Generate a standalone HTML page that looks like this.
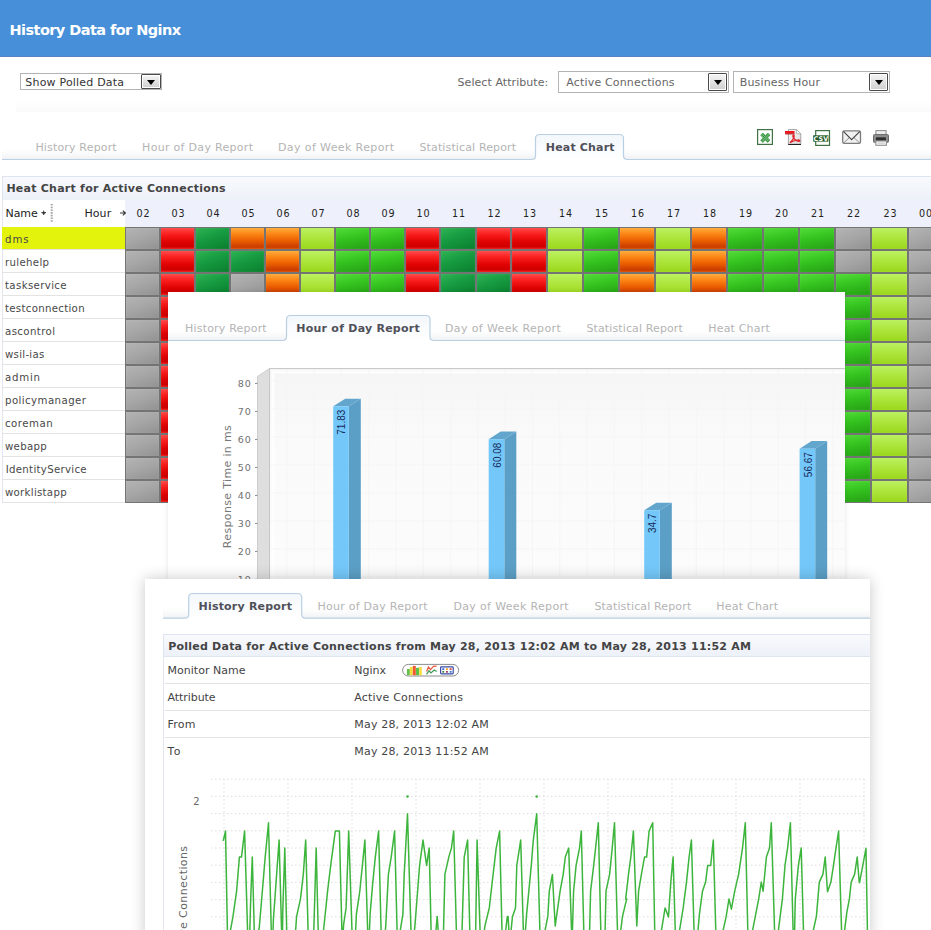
<!DOCTYPE html><html><head><meta charset="utf-8"><title>History Data for Nginx</title><style>

html,body{margin:0;padding:0;background:#fff;}
body{width:931px;height:930px;overflow:hidden;position:relative;font-family:'DejaVu Sans','Liberation Sans',sans-serif;font-size:11px;}
.t{position:absolute;white-space:pre;line-height:20px;height:20px;}
.abs{position:absolute;}
.c{position:absolute;height:21px;box-sizing:border-box;box-shadow:inset 0 0 1px rgba(255,255,255,0.35);}
.g{background:linear-gradient(160deg,#b4b4b4 0%,#a5a5a5 50%,#929292 100%);}
.r{background:linear-gradient(180deg,#ff4a4a 0%,#fa1e1e 30%,#df0303 65%,#cf0000 88%,#f41a1a 100%);}
.d{background:linear-gradient(160deg,#2fb354 0%,#169a40 45%,#0a7e2e 100%);}
.o{background:linear-gradient(180deg,#ffac3c 0%,#fb8414 30%,#ea5c00 62%,#c83c00 90%,#e05000 100%);}
.l{background:linear-gradient(180deg,#bbf160 0%,#aee63e 45%,#9bd71c 100%);}
.n{background:linear-gradient(170deg,#54dc3a 0%,#35c420 45%,#25a014 100%);}
.sel{position:absolute;box-sizing:border-box;border:1px solid #b4b4b4;background:#fff;}
.btn{position:absolute;box-sizing:border-box;border:1px solid #4a4a4a;border-radius:1px;background:linear-gradient(180deg,#f6f6f6 0%,#e2e2e2 50%,#cfcfcf 100%);box-shadow:inset 0 0 0 1px #fff;}
.btn:after{content:"";position:absolute;left:50%;top:50%;margin:-2px 0 0 -4px;border:4px solid transparent;border-top:5px solid #000;border-bottom:0;}
.pop{position:absolute;background:#fff;}
.rowline{position:absolute;height:1px;background:#e3e3e3;}

</style></head><body>
<div class="abs" style="left:0;top:0;width:931px;height:57px;background:#478fd8;border-bottom:1px solid #5b80bf;box-sizing:border-box"></div>
<div class="abs" style="left:16px;top:100px;width:915px;height:12px;background:linear-gradient(180deg,#fff,#fafafa)"></div>
<div class="sel" style="left:20px;top:73px;width:142px;height:17px"></div><div class="btn" style="left:141px;top:74px;width:20px;height:15px"></div>
<div class="sel" style="left:558px;top:71px;width:171px;height:22px"></div><div class="btn" style="left:708px;top:73px;width:19px;height:18px"></div>
<div class="sel" style="left:733px;top:71px;width:157px;height:22px"></div><div class="btn" style="left:869px;top:73px;width:19px;height:18px"></div>
<svg class="abs" style="left:0;top:0" width="931" height="170"><defs><linearGradient id="tg" x1="0" y1="0" x2="0" y2="1"><stop offset="0" stop-color="#f3f7fb"/><stop offset="1" stop-color="#fff"/></linearGradient><linearGradient id="sh" x1="0" y1="0" x2="0" y2="1"><stop offset="0" stop-color="#fff" stop-opacity="0"/><stop offset="1" stop-color="#f0f1f4"/></linearGradient></defs><rect x="2" y="146" width="929" height="13" fill="url(#sh)"/><path d="M531.5,159.5 Q535.5,159.5 535.5,155.5 V138.5 Q535.5,134.5 539.5,134.5 H619.5 Q623.5,134.5 623.5,138.5 V155.5 Q623.5,159.5 627.5,159.5 Z" fill="#fff"/><path d="M531.5,159.5 Q535.5,159.5 535.5,155.5 V138.5 Q535.5,134.5 539.5,134.5 H619.5 Q623.5,134.5 623.5,138.5 V155.5 Q623.5,159.5 627.5,159.5 Z" fill="url(#tg)"/><path d="M2,159.5 H531.5 Q535.5,159.5 535.5,155.5 V138.5 Q535.5,134.5 539.5,134.5 H619.5 Q623.5,134.5 623.5,138.5 V155.5 Q623.5,159.5 627.5,159.5 H931" fill="none" stroke="#b9d0e4" stroke-width="1.2"/></svg>
<svg class="abs" style="left:755px;top:127px" width="140" height="22" viewBox="755 127 140 22">
<defs><pattern id="hx" width="1.6" height="1.6" patternUnits="userSpaceOnUse" patternTransform="rotate(45)"><rect width="1.6" height="1.6" fill="#2f8f3a"/><rect width="0.55" height="1.6" fill="#a9dcae"/></pattern>
<linearGradient id="pg" x1="0" y1="0" x2="1" y2="1"><stop offset="0" stop-color="#fbfbfb"/><stop offset="1" stop-color="#d9d9d9"/></linearGradient></defs>
<rect x="757.6" y="129.6" width="14.8" height="14.8" fill="#fff" stroke="#3f7143" stroke-width="1.2"/>
<path d="M761.6 134 L769 141.4 M769 134 L761.6 141.4" stroke="#2f8f3a" stroke-width="3.6" fill="none"/><path d="M761.6 134 L769 141.4 M769 134 L761.6 141.4" stroke="url(#hx)" stroke-width="3" fill="none"/>
<path d="M788.4 129.6 H796.6 L800.8 133.8 V144.2 H788.4 Z" fill="url(#pg)" stroke="#9c9c9c" stroke-width="0.9"/>
<path d="M788.2 144.5 H801" stroke="#222" stroke-width="1"/>
<path d="M796.6 129.6 V133.8 H800.8 Z" fill="#fff" stroke="#9c9c9c" stroke-width="0.7"/>
<rect x="785" y="131" width="9.5" height="2.7" fill="#f0151c"/><rect x="785" y="133.5" width="9.5" height="0.9" fill="#a80c10"/>
<path d="M790 142.8 C792.6 140 794.6 137.2 794.2 135.6 C793.8 134.4 792.6 135 792.9 136.5 C793.5 139 796.6 141.2 799 141.3 C800.4 141.2 799.8 139.8 798 140 C795.4 140.3 792 141.4 790 142.8 Z" fill="none" stroke="#e0242b" stroke-width="1.25"/>
<rect x="815.7" y="130.6" width="13.8" height="14.8" fill="#fff" stroke="#3f7143" stroke-width="1.2"/>
<rect x="813.2" y="135.3" width="15.2" height="6.3" fill="#235a24"/>
<text x="820.9" y="140.8" font-family="DejaVu Sans,Liberation Sans,sans-serif" font-size="6.4" font-weight="bold" fill="#fff" text-anchor="middle" letter-spacing="0.2" opacity="0.99">CSV</text>
<rect x="842.7" y="130.8" width="17.8" height="12.6" rx="1.6" fill="#f1f1f1" stroke="#7c7c7c" stroke-width="1.3"/>
<path d="M843.6 143 L849.6 137.4 M859.8 143 L853.6 137.4" fill="none" stroke="#777" stroke-width="0.8"/>
<path d="M843.4 131.4 L851.6 139.6 L859.9 131.4" fill="none" stroke="#454545" stroke-width="1.1"/>
<rect x="875.9" y="130.6" width="10.2" height="4.4" fill="#ececec" stroke="#8a8a8a" stroke-width="1"/>
<rect x="873.5" y="134.6" width="15" height="7.8" rx="1" fill="#8e8e8e" stroke="#686868" stroke-width="1"/>
<rect x="875.9" y="137.3" width="10" height="3.2" fill="#2e2e2e"/>
<rect x="875.8" y="141" width="10.6" height="4.3" fill="#f3f3f3" stroke="#8a8a8a" stroke-width="1"/>
<path d="M877.5 143.2 H884.8" stroke="#bdbdbd" stroke-width="0.8"/>
</svg>
<div class="abs" style="left:2px;top:176px;width:929px;height:24px;box-sizing:border-box;border-top:1px solid #dfe5f0;border-left:1px solid #dfe5f0;background:linear-gradient(180deg,#f8fafd 0%,#edf1f8 100%)"></div>
<div class="abs" style="left:125px;top:200px;width:806px;height:27px;background:#eef1fb"></div>
<div class="abs" style="left:2px;top:200px;width:123px;height:27px;background:#fff;border-left:1px solid #e3e6ee;box-sizing:border-box"></div>
<svg class="abs" style="left:38px;top:200px" width="92" height="26" viewBox="38 200 92 26">
<path d="M43.7 210.6 V214.6 M41.4 212.6 H46" stroke="#333" stroke-width="1"/><path d="M42.2 213 L43.7 215 L45.2 213 Z" fill="#333"/>
<path d="M51.7 204 V222.5" stroke="#a4a4a4" stroke-width="2" stroke-dasharray="1.6 1.1"/>
<path d="M120 213 H125 M122.8 210.6 L125.4 213 L122.8 215.4" fill="none" stroke="#333" stroke-width="1.1"/>
</svg>
<div class="t" style="left:93.4px;width:100px;text-align:center;top:203.9px;font-size:9.6px;font-weight:normal;color:#222;letter-spacing:0.9px;">02</div>
<div class="t" style="left:128.4px;width:100px;text-align:center;top:203.9px;font-size:9.6px;font-weight:normal;color:#222;letter-spacing:0.9px;">03</div>
<div class="t" style="left:163.4px;width:100px;text-align:center;top:203.9px;font-size:9.6px;font-weight:normal;color:#222;letter-spacing:0.9px;">04</div>
<div class="t" style="left:198.4px;width:100px;text-align:center;top:203.9px;font-size:9.6px;font-weight:normal;color:#222;letter-spacing:0.9px;">05</div>
<div class="t" style="left:233.4px;width:100px;text-align:center;top:203.9px;font-size:9.6px;font-weight:normal;color:#222;letter-spacing:0.9px;">06</div>
<div class="t" style="left:268.4px;width:100px;text-align:center;top:203.9px;font-size:9.6px;font-weight:normal;color:#222;letter-spacing:0.9px;">07</div>
<div class="t" style="left:303.4px;width:100px;text-align:center;top:203.9px;font-size:9.6px;font-weight:normal;color:#222;letter-spacing:0.9px;">08</div>
<div class="t" style="left:338.4px;width:100px;text-align:center;top:203.9px;font-size:9.6px;font-weight:normal;color:#222;letter-spacing:0.9px;">09</div>
<div class="t" style="left:373.4px;width:100px;text-align:center;top:203.9px;font-size:9.6px;font-weight:normal;color:#222;letter-spacing:0.9px;">10</div>
<div class="t" style="left:408.9px;width:100px;text-align:center;top:203.9px;font-size:9.6px;font-weight:normal;color:#222;letter-spacing:0.9px;">11</div>
<div class="t" style="left:444.4px;width:100px;text-align:center;top:203.9px;font-size:9.6px;font-weight:normal;color:#222;letter-spacing:0.9px;">12</div>
<div class="t" style="left:479.9px;width:100px;text-align:center;top:203.9px;font-size:9.6px;font-weight:normal;color:#222;letter-spacing:0.9px;">13</div>
<div class="t" style="left:515.9px;width:100px;text-align:center;top:203.9px;font-size:9.6px;font-weight:normal;color:#222;letter-spacing:0.9px;">14</div>
<div class="t" style="left:551.9px;width:100px;text-align:center;top:203.9px;font-size:9.6px;font-weight:normal;color:#222;letter-spacing:0.9px;">15</div>
<div class="t" style="left:587.9px;width:100px;text-align:center;top:203.9px;font-size:9.6px;font-weight:normal;color:#222;letter-spacing:0.9px;">16</div>
<div class="t" style="left:623.9px;width:100px;text-align:center;top:203.9px;font-size:9.6px;font-weight:normal;color:#222;letter-spacing:0.9px;">17</div>
<div class="t" style="left:659.9px;width:100px;text-align:center;top:203.9px;font-size:9.6px;font-weight:normal;color:#222;letter-spacing:0.9px;">18</div>
<div class="t" style="left:695.9px;width:100px;text-align:center;top:203.9px;font-size:9.6px;font-weight:normal;color:#222;letter-spacing:0.9px;">19</div>
<div class="t" style="left:731.9px;width:100px;text-align:center;top:203.9px;font-size:9.6px;font-weight:normal;color:#222;letter-spacing:0.9px;">20</div>
<div class="t" style="left:767.9px;width:100px;text-align:center;top:203.9px;font-size:9.6px;font-weight:normal;color:#222;letter-spacing:0.9px;">21</div>
<div class="t" style="left:803.9px;width:100px;text-align:center;top:203.9px;font-size:9.6px;font-weight:normal;color:#222;letter-spacing:0.9px;">22</div>
<div class="t" style="left:840.4px;width:100px;text-align:center;top:203.9px;font-size:9.6px;font-weight:normal;color:#222;letter-spacing:0.9px;">23</div>
<div class="t" style="left:875.9px;width:100px;text-align:center;top:203.9px;font-size:9.6px;font-weight:normal;color:#222;letter-spacing:0.9px;">00</div>
<div class="abs" style="left:2px;top:227px;width:123px;height:276px;background:#fff;border-left:1px solid #e3e6ee;box-sizing:border-box"></div>
<div class="abs" style="left:2px;top:227px;width:123px;height:23px;background:#e4f30c"></div>
<div class="rowline" style="left:2px;top:249px;width:123px"></div>
<div class="rowline" style="left:2px;top:272px;width:123px"></div>
<div class="rowline" style="left:2px;top:295px;width:123px"></div>
<div class="rowline" style="left:2px;top:318px;width:123px"></div>
<div class="rowline" style="left:2px;top:341px;width:123px"></div>
<div class="rowline" style="left:2px;top:364px;width:123px"></div>
<div class="rowline" style="left:2px;top:387px;width:123px"></div>
<div class="rowline" style="left:2px;top:410px;width:123px"></div>
<div class="rowline" style="left:2px;top:433px;width:123px"></div>
<div class="rowline" style="left:2px;top:456px;width:123px"></div>
<div class="rowline" style="left:2px;top:479px;width:123px"></div>
<div class="rowline" style="left:2px;top:502px;width:123px"></div>
<div class="abs" style="left:125px;top:227px;width:806px;height:276px;background:#747474"></div>
<div class="c g" style="left:126px;top:228px;width:33px"></div>
<div class="c r" style="left:161px;top:228px;width:33px"></div>
<div class="c d" style="left:196px;top:228px;width:33px"></div>
<div class="c o" style="left:231px;top:228px;width:33px"></div>
<div class="c o" style="left:266px;top:228px;width:33px"></div>
<div class="c l" style="left:301px;top:228px;width:33px"></div>
<div class="c n" style="left:336px;top:228px;width:33px"></div>
<div class="c n" style="left:371px;top:228px;width:33px"></div>
<div class="c r" style="left:406px;top:228px;width:33px"></div>
<div class="c d" style="left:441px;top:228px;width:34px"></div>
<div class="c r" style="left:477px;top:228px;width:33px"></div>
<div class="c r" style="left:512px;top:228px;width:34px"></div>
<div class="c l" style="left:548px;top:228px;width:34px"></div>
<div class="c n" style="left:584px;top:228px;width:34px"></div>
<div class="c o" style="left:620px;top:228px;width:34px"></div>
<div class="c l" style="left:656px;top:228px;width:34px"></div>
<div class="c o" style="left:692px;top:228px;width:34px"></div>
<div class="c n" style="left:728px;top:228px;width:34px"></div>
<div class="c n" style="left:764px;top:228px;width:34px"></div>
<div class="c n" style="left:800px;top:228px;width:34px"></div>
<div class="c g" style="left:836px;top:228px;width:34px"></div>
<div class="c l" style="left:872px;top:228px;width:35px"></div>
<div class="c g" style="left:909px;top:228px;width:35px"></div>
<div class="c g" style="left:126px;top:251px;width:33px"></div>
<div class="c r" style="left:161px;top:251px;width:33px"></div>
<div class="c d" style="left:196px;top:251px;width:33px"></div>
<div class="c d" style="left:231px;top:251px;width:33px"></div>
<div class="c o" style="left:266px;top:251px;width:33px"></div>
<div class="c l" style="left:301px;top:251px;width:33px"></div>
<div class="c n" style="left:336px;top:251px;width:33px"></div>
<div class="c n" style="left:371px;top:251px;width:33px"></div>
<div class="c r" style="left:406px;top:251px;width:33px"></div>
<div class="c d" style="left:441px;top:251px;width:34px"></div>
<div class="c r" style="left:477px;top:251px;width:33px"></div>
<div class="c r" style="left:512px;top:251px;width:34px"></div>
<div class="c l" style="left:548px;top:251px;width:34px"></div>
<div class="c n" style="left:584px;top:251px;width:34px"></div>
<div class="c o" style="left:620px;top:251px;width:34px"></div>
<div class="c l" style="left:656px;top:251px;width:34px"></div>
<div class="c o" style="left:692px;top:251px;width:34px"></div>
<div class="c n" style="left:728px;top:251px;width:34px"></div>
<div class="c n" style="left:764px;top:251px;width:34px"></div>
<div class="c n" style="left:800px;top:251px;width:34px"></div>
<div class="c g" style="left:836px;top:251px;width:34px"></div>
<div class="c l" style="left:872px;top:251px;width:35px"></div>
<div class="c g" style="left:909px;top:251px;width:35px"></div>
<div class="c g" style="left:126px;top:274px;width:33px"></div>
<div class="c r" style="left:161px;top:274px;width:33px"></div>
<div class="c d" style="left:196px;top:274px;width:33px"></div>
<div class="c g" style="left:231px;top:274px;width:33px"></div>
<div class="c o" style="left:266px;top:274px;width:33px"></div>
<div class="c l" style="left:301px;top:274px;width:33px"></div>
<div class="c n" style="left:336px;top:274px;width:33px"></div>
<div class="c n" style="left:371px;top:274px;width:33px"></div>
<div class="c r" style="left:406px;top:274px;width:33px"></div>
<div class="c d" style="left:441px;top:274px;width:34px"></div>
<div class="c d" style="left:477px;top:274px;width:33px"></div>
<div class="c r" style="left:512px;top:274px;width:34px"></div>
<div class="c l" style="left:548px;top:274px;width:34px"></div>
<div class="c n" style="left:584px;top:274px;width:34px"></div>
<div class="c o" style="left:620px;top:274px;width:34px"></div>
<div class="c l" style="left:656px;top:274px;width:34px"></div>
<div class="c o" style="left:692px;top:274px;width:34px"></div>
<div class="c n" style="left:728px;top:274px;width:34px"></div>
<div class="c n" style="left:764px;top:274px;width:34px"></div>
<div class="c n" style="left:800px;top:274px;width:34px"></div>
<div class="c n" style="left:836px;top:274px;width:34px"></div>
<div class="c l" style="left:872px;top:274px;width:35px"></div>
<div class="c g" style="left:909px;top:274px;width:35px"></div>
<div class="c g" style="left:126px;top:297px;width:33px"></div>
<div class="c r" style="left:161px;top:297px;width:33px"></div>
<div class="c n" style="left:836px;top:297px;width:34px"></div>
<div class="c l" style="left:872px;top:297px;width:35px"></div>
<div class="c g" style="left:909px;top:297px;width:35px"></div>
<div class="c g" style="left:126px;top:320px;width:33px"></div>
<div class="c r" style="left:161px;top:320px;width:33px"></div>
<div class="c n" style="left:836px;top:320px;width:34px"></div>
<div class="c l" style="left:872px;top:320px;width:35px"></div>
<div class="c g" style="left:909px;top:320px;width:35px"></div>
<div class="c g" style="left:126px;top:343px;width:33px"></div>
<div class="c r" style="left:161px;top:343px;width:33px"></div>
<div class="c n" style="left:836px;top:343px;width:34px"></div>
<div class="c l" style="left:872px;top:343px;width:35px"></div>
<div class="c g" style="left:909px;top:343px;width:35px"></div>
<div class="c g" style="left:126px;top:366px;width:33px"></div>
<div class="c r" style="left:161px;top:366px;width:33px"></div>
<div class="c n" style="left:836px;top:366px;width:34px"></div>
<div class="c l" style="left:872px;top:366px;width:35px"></div>
<div class="c g" style="left:909px;top:366px;width:35px"></div>
<div class="c g" style="left:126px;top:389px;width:33px"></div>
<div class="c r" style="left:161px;top:389px;width:33px"></div>
<div class="c n" style="left:836px;top:389px;width:34px"></div>
<div class="c l" style="left:872px;top:389px;width:35px"></div>
<div class="c g" style="left:909px;top:389px;width:35px"></div>
<div class="c g" style="left:126px;top:412px;width:33px"></div>
<div class="c r" style="left:161px;top:412px;width:33px"></div>
<div class="c n" style="left:836px;top:412px;width:34px"></div>
<div class="c l" style="left:872px;top:412px;width:35px"></div>
<div class="c g" style="left:909px;top:412px;width:35px"></div>
<div class="c g" style="left:126px;top:435px;width:33px"></div>
<div class="c r" style="left:161px;top:435px;width:33px"></div>
<div class="c n" style="left:836px;top:435px;width:34px"></div>
<div class="c l" style="left:872px;top:435px;width:35px"></div>
<div class="c g" style="left:909px;top:435px;width:35px"></div>
<div class="c g" style="left:126px;top:458px;width:33px"></div>
<div class="c r" style="left:161px;top:458px;width:33px"></div>
<div class="c n" style="left:836px;top:458px;width:34px"></div>
<div class="c l" style="left:872px;top:458px;width:35px"></div>
<div class="c g" style="left:909px;top:458px;width:35px"></div>
<div class="c g" style="left:126px;top:481px;width:33px"></div>
<div class="c r" style="left:161px;top:481px;width:33px"></div>
<div class="c n" style="left:836px;top:481px;width:34px"></div>
<div class="c l" style="left:872px;top:481px;width:35px"></div>
<div class="c g" style="left:909px;top:481px;width:35px"></div>
<div class="t" style="left:9.5px;top:20.2px;font-size:14.5px;font-weight:bold;color:#fff;letter-spacing:-0.571px;">History Data for Nginx</div>
<div class="t" style="left:25.3px;top:73.4px;font-size:11px;font-weight:normal;color:#333;letter-spacing:0.195px;">Show Polled Data</div>
<div class="t" style="left:457.5px;top:73.4px;font-size:11px;font-weight:normal;color:#666;letter-spacing:0.068px;">Select Attribute:</div>
<div class="t" style="left:566.3px;top:73.4px;font-size:11px;font-weight:normal;color:#666;letter-spacing:0.165px;">Active Connections</div>
<div class="t" style="left:739.8px;top:73.4px;font-size:11px;font-weight:normal;color:#666;letter-spacing:0.142px;">Business Hour</div>
<div class="t" style="left:35.4px;top:138.4px;font-size:11px;font-weight:normal;color:#b4b4b4;letter-spacing:0.169px;">History Report</div>
<div class="t" style="left:142.1px;top:138.4px;font-size:11px;font-weight:normal;color:#b4b4b4;letter-spacing:0.301px;">Hour of Day Report</div>
<div class="t" style="left:278.0px;top:138.4px;font-size:11px;font-weight:normal;color:#b4b4b4;letter-spacing:0.387px;">Day of Week Report</div>
<div class="t" style="left:419.5px;top:138.4px;font-size:11px;font-weight:normal;color:#b4b4b4;letter-spacing:0.129px;">Statistical Report</div>
<div class="t" style="left:545.8px;top:138.4px;font-size:11px;font-weight:bold;color:#50505a;letter-spacing:0.168px;">Heat Chart</div>
<div class="t" style="left:6.4px;top:179.4px;font-size:11px;font-weight:bold;color:#444;letter-spacing:0.245px;">Heat Chart for Active Connections</div>
<div class="t" style="left:5.5px;top:204.4px;font-size:11px;font-weight:normal;color:#222;letter-spacing:-0.084px;">Name</div>
<div class="t" style="left:84.4px;top:204.4px;font-size:11px;font-weight:normal;color:#222;letter-spacing:0.100px;">Hour</div>
<div class="t" style="left:5.0px;top:229.7px;font-size:10.2px;font-weight:normal;color:#484848;letter-spacing:0.948px;">dms</div>
<div class="t" style="left:5.0px;top:252.7px;font-size:10.2px;font-weight:normal;color:#484848;letter-spacing:0.319px;">rulehelp</div>
<div class="t" style="left:5.0px;top:275.7px;font-size:10.2px;font-weight:normal;color:#484848;letter-spacing:0.366px;">taskservice</div>
<div class="t" style="left:5.0px;top:298.7px;font-size:10.2px;font-weight:normal;color:#484848;letter-spacing:0.300px;">testconnection</div>
<div class="t" style="left:5.0px;top:321.7px;font-size:10.2px;font-weight:normal;color:#484848;letter-spacing:0.391px;">ascontrol</div>
<div class="t" style="left:5.0px;top:344.7px;font-size:10.2px;font-weight:normal;color:#484848;letter-spacing:0.277px;">wsil-ias</div>
<div class="t" style="left:5.0px;top:367.7px;font-size:10.2px;font-weight:normal;color:#484848;letter-spacing:0.770px;">admin</div>
<div class="t" style="left:5.0px;top:390.7px;font-size:10.2px;font-weight:normal;color:#484848;letter-spacing:0.427px;">policymanager</div>
<div class="t" style="left:5.0px;top:413.7px;font-size:10.2px;font-weight:normal;color:#484848;letter-spacing:0.483px;">coreman</div>
<div class="t" style="left:5.0px;top:436.7px;font-size:10.2px;font-weight:normal;color:#484848;letter-spacing:0.270px;">webapp</div>
<div class="t" style="left:5.7px;top:459.7px;font-size:10.2px;font-weight:normal;color:#484848;letter-spacing:0.300px;">IdentityService</div>
<div class="t" style="left:5.0px;top:482.7px;font-size:10.2px;font-weight:normal;color:#484848;letter-spacing:0.280px;">worklistapp</div>
<div class="pop" style="left:168px;top:292px;width:677px;height:300px;box-shadow:0 0 5px rgba(0,0,0,0.10)">
</div>
<svg class="abs" style="left:0;top:0" width="931" height="600"><rect x="168" y="327" width="677" height="13" fill="url(#sh)"/><path d="M282.5,340.5 Q286.5,340.5 286.5,336.5 V319.5 Q286.5,315.5 290.5,315.5 H426 Q430,315.5 430,319.5 V336.5 Q430,340.5 434,340.5 Z" fill="#fff"/><path d="M282.5,340.5 Q286.5,340.5 286.5,336.5 V319.5 Q286.5,315.5 290.5,315.5 H426 Q430,315.5 430,319.5 V336.5 Q430,340.5 434,340.5 Z" fill="url(#tg)"/><path d="M168,340.5 H282.5 Q286.5,340.5 286.5,336.5 V319.5 Q286.5,315.5 290.5,315.5 H426 Q430,315.5 430,319.5 V336.5 Q430,340.5 434,340.5 H845" fill="none" stroke="#b9d0e4" stroke-width="1.2"/>
<defs><linearGradient id="bw" x1="0" y1="0" x2="0" y2="1"><stop offset="0" stop-color="#f5f5f5"/><stop offset="0.3" stop-color="#fafafa"/><stop offset="1" stop-color="#fcfcfc"/></linearGradient></defs>
<clipPath id="c2"><rect x="168" y="292" width="677" height="300"/></clipPath><g clip-path="url(#c2)">
<rect x="269.5" y="368.5" width="590" height="232" fill="url(#bw)" stroke="#c9c9c9" stroke-width="1"/>
<rect x="273" y="372" width="590" height="228" fill="none" stroke="#fff" stroke-width="3" opacity="0.8"/>
<path d="M257.5 376.5 L269.5 368.5 V600 H257.5 Z" fill="#dedede" stroke="#c4c4c4" stroke-width="0.8"/>
<path d="M270 380.9 H845 M270 408.9 H845 M270 436.9 H845 M270 464.9 H845 M270 492.9 H845 M270 520.9 H845 M270 548.9 H845 M270 576.9 H845 M270 604.9 H845 M286.8 369 V600 M314.1 369 V600 M341.4 369 V600 M368.7 369 V600 M396.0 369 V600 M423.3 369 V600 M450.6 369 V600 M477.9 369 V600 M505.2 369 V600 M532.5 369 V600 M559.8 369 V600 M587.1 369 V600 M614.4 369 V600 M641.7 369 V600 M669.0 369 V600 M696.3 369 V600 M723.6 369 V600 M750.9 369 V600 M778.2 369 V600 M805.5 369 V600 M832.8 369 V600 M860.1 369 V600" stroke="#f5f5f5" stroke-width="1" fill="none"/>
<path d="M255 383.4 H257.5 M255 411.4 H257.5 M255 439.4 H257.5 M255 467.4 H257.5 M255 495.4 H257.5 M255 523.4 H257.5 M255 551.4 H257.5 M255 579.4 H257.5" stroke="#888" stroke-width="1" fill="none"/>
<path d="M348.8 406.27599999999995 L360.8 398.67599999999993 V600 H348.8 Z" fill="#5c9fc6"/>
<path d="M333.2 406.27599999999995 L345.2 398.67599999999993 H360.8 L348.8 406.27599999999995 Z" fill="#62a6cd"/>
<rect x="333.2" y="406.27599999999995" width="15.6" height="193.72400000000005" fill="#74c8f9"/>
<text transform="translate(345.4 409.7) rotate(-90)" text-anchor="end" font-family="Liberation Sans,sans-serif" font-size="10" fill="#16285a">71.83</text>
<path d="M504.3 439.176 L516.3 431.57599999999996 V600 H504.3 Z" fill="#5c9fc6"/>
<path d="M488.7 439.176 L500.7 431.57599999999996 H516.3 L504.3 439.176 Z" fill="#62a6cd"/>
<rect x="488.7" y="439.176" width="15.6" height="160.824" fill="#74c8f9"/>
<text transform="translate(500.9 442.6) rotate(-90)" text-anchor="end" font-family="Liberation Sans,sans-serif" font-size="10" fill="#16285a">60.08</text>
<path d="M659.8000000000001 510.23999999999995 L671.8000000000001 502.63999999999993 V600 H659.8000000000001 Z" fill="#5c9fc6"/>
<path d="M644.2 510.23999999999995 L656.2 502.63999999999993 H671.8000000000001 L659.8000000000001 510.23999999999995 Z" fill="#62a6cd"/>
<rect x="644.2" y="510.23999999999995" width="15.6" height="89.76000000000005" fill="#74c8f9"/>
<text transform="translate(656.4 513.6) rotate(-90)" text-anchor="end" font-family="Liberation Sans,sans-serif" font-size="10" fill="#16285a">34.7</text>
<path d="M815.2 448.724 L827.2 441.12399999999997 V600 H815.2 Z" fill="#5c9fc6"/>
<path d="M799.6 448.724 L811.6 441.12399999999997 H827.2 L815.2 448.724 Z" fill="#62a6cd"/>
<rect x="799.6" y="448.724" width="15.6" height="151.276" fill="#74c8f9"/>
<text transform="translate(811.8 452.1) rotate(-90)" text-anchor="end" font-family="Liberation Sans,sans-serif" font-size="10" fill="#16285a">56.67</text>
</g>
<text transform="translate(230.5 486.5) rotate(-90)" text-anchor="middle" font-family="DejaVu Sans,Liberation Sans,sans-serif" font-size="11" letter-spacing="0.35" fill="#777">Response Time in ms</text>
</svg>
<div class="t" style="left:151.6px;width:100px;text-align:right;top:373.7px;font-size:9.5px;font-weight:normal;color:#707070;letter-spacing:0.9px;">80</div>
<div class="t" style="left:151.6px;width:100px;text-align:right;top:401.7px;font-size:9.5px;font-weight:normal;color:#707070;letter-spacing:0.9px;">70</div>
<div class="t" style="left:151.6px;width:100px;text-align:right;top:429.7px;font-size:9.5px;font-weight:normal;color:#707070;letter-spacing:0.9px;">60</div>
<div class="t" style="left:151.6px;width:100px;text-align:right;top:457.7px;font-size:9.5px;font-weight:normal;color:#707070;letter-spacing:0.9px;">50</div>
<div class="t" style="left:151.6px;width:100px;text-align:right;top:485.7px;font-size:9.5px;font-weight:normal;color:#707070;letter-spacing:0.9px;">40</div>
<div class="t" style="left:151.6px;width:100px;text-align:right;top:513.7px;font-size:9.5px;font-weight:normal;color:#707070;letter-spacing:0.9px;">30</div>
<div class="t" style="left:151.6px;width:100px;text-align:right;top:541.7px;font-size:9.5px;font-weight:normal;color:#707070;letter-spacing:0.9px;">20</div>
<div class="t" style="left:151.6px;width:100px;text-align:right;top:569.7px;font-size:9.5px;font-weight:normal;color:#707070;letter-spacing:0.9px;">10</div>
<div class="t" style="left:185.0px;top:319.4px;font-size:11px;font-weight:normal;color:#b4b4b4;letter-spacing:0.199px;">History Report</div>
<div class="t" style="left:296.3px;top:319.4px;font-size:11px;font-weight:bold;color:#50505a;letter-spacing:0.242px;">Hour of Day Report</div>
<div class="t" style="left:445.0px;top:319.4px;font-size:11px;font-weight:normal;color:#b4b4b4;letter-spacing:0.375px;">Day of Week Report</div>
<div class="t" style="left:586.4px;top:319.4px;font-size:11px;font-weight:normal;color:#b4b4b4;letter-spacing:0.123px;">Statistical Report</div>
<div class="t" style="left:708.3px;top:319.4px;font-size:11px;font-weight:normal;color:#b4b4b4;letter-spacing:0.175px;">Heat Chart</div>
<div class="pop" style="left:145px;top:579px;width:725px;height:360px;box-shadow:0 0 14px rgba(0,0,0,0.22)"></div>
<svg class="abs" style="left:0;top:0" width="931" height="930"><rect x="163" y="605" width="707" height="13" fill="url(#sh)"/><path d="M184.7,618.2 Q188.7,618.2 188.7,614.2 V597.5 Q188.7,593.5 192.7,593.5 H297.7 Q301.7,593.5 301.7,597.5 V614.2 Q301.7,618.2 305.7,618.2 Z" fill="#fff"/><path d="M184.7,618.2 Q188.7,618.2 188.7,614.2 V597.5 Q188.7,593.5 192.7,593.5 H297.7 Q301.7,593.5 301.7,597.5 V614.2 Q301.7,618.2 305.7,618.2 Z" fill="url(#tg)"/><path d="M163,618.2 H184.7 Q188.7,618.2 188.7,614.2 V597.5 Q188.7,593.5 192.7,593.5 H297.7 Q301.7,593.5 301.7,597.5 V614.2 Q301.7,618.2 305.7,618.2 H870" fill="none" stroke="#b9d0e4" stroke-width="1.2"/></svg>
<div class="abs" style="left:163px;top:634px;width:707px;height:23px;box-sizing:border-box;border:1px solid #dfe5f0;border-right:0;background:linear-gradient(180deg,#f8fafd 0%,#edf1f8 100%)"></div>
<div class="abs" style="left:163px;top:657px;width:1px;height:273px;background:#e3e6ee"></div>
<div class="rowline" style="left:165px;top:683px;width:705px"></div>
<div class="rowline" style="left:165px;top:710px;width:705px"></div>
<div class="rowline" style="left:165px;top:737px;width:705px"></div>
<svg class="abs" style="left:400px;top:662px" width="62" height="18" viewBox="400 662 62 18">
<rect x="402.6" y="664.4" width="56" height="11.6" rx="5.8" fill="#fff" stroke="#8c8c8c" stroke-width="1"/>
<rect x="407" y="669" width="2.8" height="6.2" fill="#5fbf4a"/><rect x="409.8" y="667" width="2.8" height="8.2" fill="#f3dc3c"/>
<rect x="412.8" y="665.9" width="3" height="9.3" fill="#ee5a2e"/><rect x="416" y="667.8" width="3" height="7.4" fill="#5fbf4a"/>
<rect x="419.2" y="667" width="2.6" height="8.2" fill="#f3dc3c"/>
<path d="M426.5 671.5 L428.5 667 L430.5 669.6 L433.5 666.4 L436.6 666.2" fill="none" stroke="#e8553a" stroke-width="1.2"/>
<path d="M426.5 674.4 L429 670.8 L431 673 L434.2 670 L436.6 671.6" fill="none" stroke="#3f9b52" stroke-width="1.2"/>
<rect x="440.6" y="666.8" width="12.6" height="7" rx="0.8" fill="#fff" stroke="#3b4ba3" stroke-width="1.2"/>
<rect x="442.3" y="668.3" width="1.9" height="1.7" fill="#2f63d8"/><rect x="446" y="668.3" width="1.9" height="1.7" fill="#f0a020"/><rect x="449.7" y="668.3" width="1.9" height="1.7" fill="#e0402a"/>
<rect x="442.3" y="671" width="1.9" height="1.7" fill="#3a8a3a"/><rect x="446" y="671" width="1.9" height="1.7" fill="#a03a5a"/><rect x="449.7" y="671" width="1.9" height="1.7" fill="#2f7ad8"/>
</svg>
<svg class="abs" style="left:0;top:760px" width="931" height="170" viewBox="0 760 931 170">
<clipPath id="cc"><rect x="146" y="760" width="724" height="170"/></clipPath><g clip-path="url(#cc)">
<path d="M211 779.2 H865 M211 796.4 H865 M211 813.6 H865 M211 830.8 H865 M211 848.0 H865 M211 865.2 H865 M211 882.4 H865 M211 899.6 H865 M211 916.8 H865 M224.0 779 V930 M288.0 779 V930 M352.0 779 V930 M416.0 779 V930 M480.0 779 V930 M544.0 779 V930 M608.0 779 V930 M672.0 779 V930 M736.0 779 V930 M800.0 779 V930 M864.0 779 V930" stroke="#dedede" stroke-width="1" stroke-dasharray="1.5 2.5" fill="none"/>
<path d="M223.2 840.9 L225.5 831.1 L227.5 935.0 L229.6 935.0 L233.0 916.4 L236.6 891.2 L239.4 857.1 L241.5 857.1 L244.6 831.1 L247.7 935.0 L249.7 935.0 L250.7 898.9 L252.3 857.1 L254.4 935.0 L258.0 935.0 L259.3 927.3 L265.2 857.1 L268.5 822.8 L271.4 935.0 L272.9 935.0 L273.4 919.5 L279.1 840.1 L281.7 935.0 L282.5 935.0 L282.7 914.4 L284.8 848.1 L286.8 935.0 L295.3 935.0 L296.6 916.4 L300.5 898.9 L303.3 874.4 L305.7 840.1 L308.2 935.0 L313.4 935.0 L313.9 927.3 L316.2 848.1 L318.3 935.0 L322.9 935.0 L324.0 926.0 L327.6 891.2 L330.7 865.4 L335.3 831.1 L339.4 831.1 L342.0 935.0 L343.0 935.0 L343.6 924.7 L346.1 907.9 L348.7 831.1 L352.1 935.0 L355.4 935.0 L356.4 914.4 L359.8 891.2 L364.9 840.1 L367.8 935.0 L369.3 935.0 L370.1 914.4 L372.7 883.4 L375.3 857.1 L378.6 831.1 L381.2 935.0 L385.1 935.0 L385.8 924.7 L388.4 874.4 L391.2 857.1 L394.6 831.1 L397.2 935.0 L398.2 935.0 L400.3 930.1 L402.9 914.4 L404.2 874.4 L407.5 813.8 L411.1 935.0 L414.0 935.0 L415.0 924.7 L419.6 865.4 L423.0 840.1 L426.6 865.4 L429.2 848.1 L431.2 935.0 L435.6 935.0 L437.2 916.4 L438.5 935.0 L443.4 935.0 L444.9 874.4 L448.8 857.1 L451.4 848.1 L453.7 831.1 L456.5 935.0 L461.9 935.0 L464.2 857.1 L467.6 840.1 L469.9 935.0 L475.6 935.0 L477.1 840.1 L480.2 935.0 L483.8 935.0 L484.9 926.0 L489.3 907.9 L493.1 874.4 L496.2 848.1 L499.6 831.1 L502.1 935.0 L505.2 935.0 L507.3 916.4 L508.1 916.4 L509.1 935.0 L510.6 935.0 L512.5 916.4 L515.5 907.9 L516.8 865.4 L520.7 840.1 L523.5 935.0 L525.1 935.0 L526.6 914.4 L531.3 865.4 L533.3 840.1 L536.7 813.8 L540.0 935.0 L544.2 935.0 L547.8 916.4 L549.3 891.2 L552.4 874.4 L555.2 926.0 L560.1 891.2 L563.2 874.4 L565.3 857.1 L568.7 848.1 L571.7 935.0 L572.3 935.0 L573.6 891.2 L576.1 865.4 L579.5 848.1 L581.3 831.1 L583.9 935.0 L589.5 935.0 L590.6 891.2 L593.7 865.4 L598.3 822.8 L600.9 935.0 L605.0 935.0 L606.0 891.2 L609.6 874.4 L612.2 848.1 L614.5 822.8 L617.6 935.0 L620.2 935.0 L622.5 916.4 L626.7 898.9 L625.7 898.9 L628.5 874.4 L630.8 857.1 L633.4 831.1 L636.8 926.0 L638.6 891.2 L641.4 874.4 L644.5 857.1 L646.6 857.1 L649.1 831.1 L652.7 822.8 L654.8 935.0 L660.7 935.0 L665.1 907.9 L668.5 916.9 L670.8 882.1 L673.1 857.1 L675.4 935.0 L678.8 935.0 L683.2 907.9 L686.5 882.1 L689.1 857.1 L691.4 840.1 L694.2 935.0 L697.6 935.0 L699.4 914.4 L702.5 891.2 L705.6 882.1 L707.7 865.4 L710.7 865.4 L713.3 840.1 L715.9 935.0 L722.1 935.0 L726.2 916.4 L729.0 898.9 L731.4 909.2 L734.7 891.2 L738.6 874.4 L742.5 848.1 L745.3 822.8 L747.9 935.0 L751.7 935.0 L755.3 916.4 L758.7 898.9 L761.3 882.1 L763.1 891.2 L766.4 857.1 L769.5 848.1 L771.3 822.8 L774.7 935.0 L777.8 935.0 L782.4 898.9 L785.0 865.4 L787.6 848.1 L790.4 822.8 L793.2 935.0 L794.5 935.0 L795.3 898.9 L798.4 865.4 L801.2 848.1 L803.6 935.0 L812.3 935.0 L816.4 916.4 L819.3 882.1 L822.9 874.4 L825.2 857.1 L827.5 891.7 L830.9 882.1 L833.5 865.4 L836.0 848.1 L838.6 831.1 L841.7 935.0 L844.0 935.0 L846.9 911.8 L849.4 898.9 L851.2 882.1 L854.6 874.4 L857.2 857.1 L859.2 882.1 L859.5 882.8 L866.0 848.3 L867.5 935.0" fill="none" stroke="#3db53d" stroke-width="1.5" stroke-linejoin="round"/>
<circle cx="407.5" cy="796.5" r="1.3" fill="#3db53d"/><circle cx="536.7" cy="796.5" r="1.3" fill="#3db53d"/>
<text x="196.5" y="804.5" text-anchor="middle" font-family="DejaVu Sans,Liberation Sans,sans-serif" font-size="10" fill="#666">2</text>
<text transform="translate(187 930) rotate(-90)" font-family="DejaVu Sans,Liberation Sans,sans-serif" font-size="11" letter-spacing="0.4" fill="#666" text-anchor="end" x="84.5">Active Connections</text>
</g></svg>
<div class="t" style="left:198.5px;top:596.9px;font-size:11px;font-weight:bold;color:#50505a;letter-spacing:0.207px;">History Report</div>
<div class="t" style="left:317.4px;top:596.9px;font-size:11px;font-weight:normal;color:#b4b4b4;letter-spacing:0.260px;">Hour of Day Report</div>
<div class="t" style="left:453.4px;top:596.9px;font-size:11px;font-weight:normal;color:#b4b4b4;letter-spacing:0.346px;">Day of Week Report</div>
<div class="t" style="left:594.5px;top:596.9px;font-size:11px;font-weight:normal;color:#b4b4b4;letter-spacing:0.140px;">Statistical Report</div>
<div class="t" style="left:716.3px;top:596.9px;font-size:11px;font-weight:normal;color:#b4b4b4;letter-spacing:0.230px;">Heat Chart</div>
<div class="t" style="left:168.2px;top:636.9px;font-size:11px;font-weight:bold;color:#444;letter-spacing:0.229px;">Polled Data for Active Connections from May 28, 2013 12:02 AM to May 28, 2013 11:52 AM</div>
<div class="t" style="left:167.4px;top:661.4px;font-size:11px;font-weight:normal;color:#444;letter-spacing:0.039px;">Monitor Name</div>
<div class="t" style="left:354.3px;top:661.4px;font-size:11px;font-weight:normal;color:#444;letter-spacing:-0.013px;">Nginx</div>
<div class="t" style="left:167.4px;top:688.4px;font-size:11px;font-weight:normal;color:#444;letter-spacing:-0.047px;">Attribute</div>
<div class="t" style="left:354.3px;top:688.4px;font-size:11px;font-weight:normal;color:#444;letter-spacing:0.188px;">Active Connections</div>
<div class="t" style="left:167.4px;top:715.4px;font-size:11px;font-weight:normal;color:#444;letter-spacing:0.278px;">From</div>
<div class="t" style="left:354.3px;top:715.4px;font-size:11px;font-weight:normal;color:#444;letter-spacing:0.178px;">May 28, 2013 12:02 AM</div>
<div class="t" style="left:167.4px;top:742.4px;font-size:11px;font-weight:normal;color:#444;letter-spacing:1.506px;">To</div>
<div class="t" style="left:354.3px;top:742.4px;font-size:11px;font-weight:normal;color:#444;letter-spacing:0.178px;">May 28, 2013 11:52 AM</div>
</body></html>
